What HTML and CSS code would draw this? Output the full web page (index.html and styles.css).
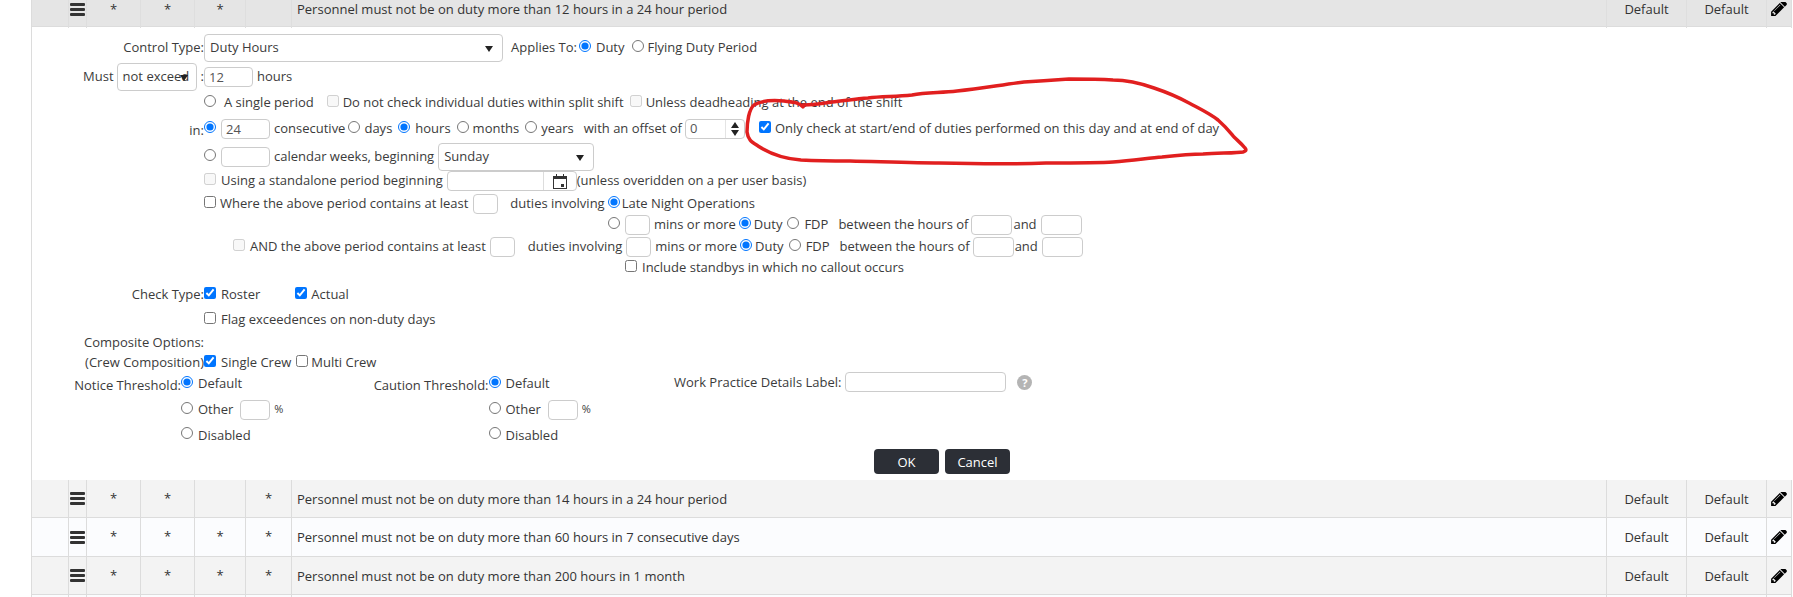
FILE: index.html
```html
<!DOCTYPE html>
<html>
<head>
    <meta charset="utf-8">
    <title>Work Practice Rules</title>
    <link rel="stylesheet" href="styles.css">
</head>
<body>
<div class="page">
    <!-- open rule -->
    <div class="rule rule-open">
        <div class="cell"></div>
        <div class="cell"><svg class="bars" viewBox="0 0 15 13"><rect width="15" height="3" rx="1"/><rect y="5" width="15" height="3" rx="1"/><rect y="10" width="15" height="3" rx="1"/></svg></div>
        <div class="cell star">*</div>
        <div class="cell star">*</div>
        <div class="cell star">*</div>
        <div class="cell"></div>
        <div class="cell name">Personnel must not be on duty more than 12 hours in a 24 hour period</div>
        <div class="cell">Default</div>
        <div class="cell">Default</div>
        <div class="cell"><svg class="pencil" viewBox="0 128 1515 1344"><path d="M363 1344l91-91-235-235-91 91v107h128v128h107zm523-928q0-22-22-22-10 0-17 7l-542 542q-7 7-7 17 0 22 22 22 10 0 17-7l542-542q7-7 7-17zm-54-192l416 416-832 832h-416v-416zm683 96q0 53-37 90l-166 166-416-416 166-165q36-38 90-38 53 0 91 38l235 234q37 39 37 91z"/></svg></div>
    </div>

    <div class="form">
        <div class="row h29">
            <div class="lbl">Control Type:</div>
            <div class="select w299">Duty Hours</div>
            <span class="ml8">Applies To:</span>
            <input class="ml2" type="radio" name="applies" checked>
            <span class="ml4">Duty</span>
            <input class="ml7" type="radio" name="applies">
            <span class="ml3">Flying Duty Period</span>
        </div>
        <div class="row h29">
            <div class="lbl lbl-sel">
                <span>Must</span>
                <div class="select w80 ml3 tight">not exceed</div>
                <span class="ml4">:</span>
            </div>
            <input class="text w49 ml0" type="text" value="12">
            <span class="ml4">hours</span>
        </div>
        <div class="row h24">
            <div class="lbl"></div>
            <input type="radio" name="period">
            <span class="ml7">A single period</span>
            <input class="ml13" type="checkbox" disabled>
            <span class="ml3">Do not check individual duties within split shift</span>
            <input class="ml6" type="checkbox" disabled>
            <span class="ml3">Unless deadheading at the end of the shift</span>
        </div>
        <div class="row h27">
            <div class="lbl"><span class="low">in:</span></div>
            <input type="radio" name="period" checked>
            <input class="text w49 ml4" type="text" value="24">
            <span class="ml4">consecutive</span>
            <input class="ml3" type="radio" name="unit">
            <span class="ml3">days</span>
            <input class="ml6" type="radio" name="unit" checked>
            <span class="ml4">hours</span>
            <input class="ml6" type="radio" name="unit">
            <span class="ml3">months</span>
            <input class="ml6" type="radio" name="unit">
            <span class="ml3">years</span>
            <span class="ml10">with an offset of</span>
            <div class="spin ml3">
                <span>0</span>
                <div class="arrows"><i class="up"></i><i class="down"></i></div>
            </div>
            <input class="ml14" type="checkbox" checked>
            <span class="ml3">Only check at start/end of duties performed on this day and at end of day</span>
        </div>
        <div class="row h29">
            <div class="lbl"></div>
            <input type="radio" name="period">
            <input class="text w49 ml4" type="text">
            <span class="ml4">calendar weeks, beginning</span>
            <div class="select w156 ml4">Sunday</div>
        </div>
        <div class="row h20">
            <div class="lbl"></div>
            <input type="checkbox" disabled>
            <span class="ml4">Using a standalone period beginning</span>
            <div class="date ml4">
                <div class="addon">
                    <svg class="cal" viewBox="0 0 14 15"><path d="M3 0h1v2h6V0h1v2h3v13H0V2h3zM1 5v9h12V5z"/><rect x="8" y="10" width="3" height="3"/></svg>
                </div>
            </div>
            <span class="ml0">(unless overidden on a per user basis)</span>
        </div>
        <div class="row h23 mt1">
            <div class="lbl"></div>
            <input type="checkbox">
            <span class="ml3">Where the above period contains at least</span>
            <input class="text w25 ml5" type="text">
            <span class="ml12">duties involving</span>
            <input class="ml3" type="radio" name="involve" checked>
            <span class="ml1">Late Night Operations</span>
        </div>
        <div class="row h20">
            <div class="lbl"></div>
            <input class="push-mins" type="radio" name="involve">
            <input class="text w25 ml4" type="text">
            <span class="ml4">mins or more</span>
            <input class="ml3" type="radio" name="basis1" checked>
            <span class="ml2">Duty</span>
            <input class="ml5" type="radio" name="basis1">
            <span class="ml4">FDP</span>
            <span class="ml10">between the hours of</span>
            <input class="text w41 ml3" type="text">
            <span class="ml1">and</span>
            <input class="text w41 ml4" type="text">
        </div>
        <div class="row h20 mt2">
            <div class="lbl"></div>
            <input class="push-and" type="checkbox" disabled>
            <span class="ml4">AND the above period contains at least</span>
            <input class="text w25 ml4" type="text">
            <span class="ml13">duties involving</span>
            <input class="text w25 ml4" type="text">
            <span class="ml4">mins or more</span>
            <input class="ml3" type="radio" name="basis2" checked>
            <span class="ml2">Duty</span>
            <input class="ml5" type="radio" name="basis2">
            <span class="ml4">FDP</span>
            <span class="ml10">between the hours of</span>
            <input class="text w41 ml3" type="text">
            <span class="ml1">and</span>
            <input class="text w41 ml4" type="text">
        </div>
        <div class="row h22">
            <div class="lbl"></div>
            <input class="push-incl" type="checkbox">
            <span class="ml4">Include standbys in which no callout occurs</span>
        </div>
        <div class="row h21 mt5">
            <div class="lbl"><span class="low1">Check Type:</span></div>
            <input type="checkbox" checked>
            <span class="ml4">Roster</span>
            <input class="ml35" type="checkbox" checked>
            <span class="ml3">Actual</span>
        </div>
        <div class="row h20 mt5">
            <div class="lbl"></div>
            <input type="checkbox">
            <span class="ml4">Flag exceedences on non-duty days</span>
        </div>
        <div class="row h20 mt3">
            <div class="lbl">Composite Options:</div>
        </div>
        <div class="row h18 crew">
            <div class="lbl">(Crew Composition)</div>
            <input type="checkbox" checked>
            <span class="ml4">Single Crew</span>
            <input class="ml5" type="checkbox">
            <span class="ml2">Multi Crew</span>
        </div>

        <div class="thresholds">
            <div class="th-label"><span>Notice Threshold:</span></div>
            <div class="opt"><input type="radio" name="notice" checked><span class="ml4 up">Default</span></div>
            <div class="th-label"><span>Caution Threshold:</span></div>
            <div class="opt"><input type="radio" name="caution" checked><span class="ml4 up">Default</span></div>
            <div class="work">
                <span>Work Practice Details Label:</span>
                <input class="text w161 ml4" type="text">
                <span class="help ml11">?</span>
            </div>

            <div></div>
            <div class="opt"><input type="radio" name="notice"><span class="ml4">Other</span><input class="text w29 ml7" type="text"><span class="ml4 small">%</span></div>
            <div></div>
            <div class="opt"><input type="radio" name="caution"><span class="ml4">Other</span><input class="text w29 ml7" type="text"><span class="ml4 small">%</span></div>
            <div></div>

            <div></div>
            <div class="opt"><input type="radio" name="notice"><span class="ml4">Disabled</span></div>
            <div></div>
            <div class="opt"><input type="radio" name="caution"><span class="ml4">Disabled</span></div>
            <div></div>
        </div>

        <div class="buttons">
            <button class="btn">OK</button>
            <button class="btn">Cancel</button>
        </div>
    </div>

    <div class="rule rule-odd">
        <div class="cell"></div>
        <div class="cell"><svg class="bars" viewBox="0 0 15 13"><rect width="15" height="3" rx="1"/><rect y="5" width="15" height="3" rx="1"/><rect y="10" width="15" height="3" rx="1"/></svg></div>
        <div class="cell star">*</div>
        <div class="cell star">*</div>
        <div class="cell star"></div>
        <div class="cell star">*</div>
        <div class="cell name">Personnel must not be on duty more than 14 hours in a 24 hour period</div>
        <div class="cell">Default</div>
        <div class="cell">Default</div>
        <div class="cell"><svg class="pencil" viewBox="0 128 1515 1344"><path d="M363 1344l91-91-235-235-91 91v107h128v128h107zm523-928q0-22-22-22-10 0-17 7l-542 542q-7 7-7 17 0 22 22 22 10 0 17-7l542-542q7-7 7-17zm-54-192l416 416-832 832h-416v-416zm683 96q0 53-37 90l-166 166-416-416 166-165q36-38 90-38 53 0 91 38l235 234q37 39 37 91z"/></svg></div>
    </div>
    <div class="rule rule-even rule-tall">
        <div class="cell"></div>
        <div class="cell"><svg class="bars" viewBox="0 0 15 13"><rect width="15" height="3" rx="1"/><rect y="5" width="15" height="3" rx="1"/><rect y="10" width="15" height="3" rx="1"/></svg></div>
        <div class="cell star">*</div>
        <div class="cell star">*</div>
        <div class="cell star">*</div>
        <div class="cell star">*</div>
        <div class="cell name">Personnel must not be on duty more than 60 hours in 7 consecutive days</div>
        <div class="cell">Default</div>
        <div class="cell">Default</div>
        <div class="cell"><svg class="pencil" viewBox="0 128 1515 1344"><path d="M363 1344l91-91-235-235-91 91v107h128v128h107zm523-928q0-22-22-22-10 0-17 7l-542 542q-7 7-7 17 0 22 22 22 10 0 17-7l542-542q7-7 7-17zm-54-192l416 416-832 832h-416v-416zm683 96q0 53-37 90l-166 166-416-416 166-165q36-38 90-38 53 0 91 38l235 234q37 39 37 91z"/></svg></div>
    </div>
    <div class="rule rule-odd">
        <div class="cell"></div>
        <div class="cell"><svg class="bars" viewBox="0 0 15 13"><rect width="15" height="3" rx="1"/><rect y="5" width="15" height="3" rx="1"/><rect y="10" width="15" height="3" rx="1"/></svg></div>
        <div class="cell star">*</div>
        <div class="cell star">*</div>
        <div class="cell star">*</div>
        <div class="cell star">*</div>
        <div class="cell name">Personnel must not be on duty more than 200 hours in 1 month</div>
        <div class="cell">Default</div>
        <div class="cell">Default</div>
        <div class="cell"><svg class="pencil" viewBox="0 128 1515 1344"><path d="M363 1344l91-91-235-235-91 91v107h128v128h107zm523-928q0-22-22-22-10 0-17 7l-542 542q-7 7-7 17 0 22 22 22 10 0 17-7l542-542q7-7 7-17zm-54-192l416 416-832 832h-416v-416zm683 96q0 53-37 90l-166 166-416-416 166-165q36-38 90-38 53 0 91 38l235 234q37 39 37 91z"/></svg></div>
    </div>
    <div class="rule rule-even rule-last">
        <div class="cell"></div><div class="cell"></div><div class="cell"></div><div class="cell"></div>
        <div class="cell"></div><div class="cell"></div><div class="cell"></div><div class="cell"></div>
        <div class="cell"></div><div class="cell"></div>
    </div>
</div>

<!-- red pen mark drawn over the screenshot -->
<svg class="scribble" viewBox="0 0 1793 597">
    <path d="M803 107C799 102 792 102 784 101C772 100 760 101 754 105C749 109 747 122 747 132C748 140 752 142 758 146C772 155 788 159 801 160C820 161 840 161 850 161C890 162 920 163 939 163C980 164 1020 164 1046 163C1080 163 1100 163 1113 162C1135 160 1150 158 1162 157C1180 155 1195 154 1203 154C1220 153 1238 153 1243 152C1247 151 1246 149 1245 148C1241 143 1238 141 1234 137C1229 131 1226 127 1218 120C1209 113 1200 109 1189 103C1178 97 1166 92 1154 88C1140 83 1128 80 1113 80C1098 79 1085 79 1069 79C1052 80 1040 81 1024 82C1000 85 980 89 957 91C940 93 926 92 912 95C895 97 882 96 868 98C855 99 843 101 832 102C820 104 812 105 803 105"/>
</svg>
</body>
</html>
```

FILE: styles.css
```css
html, body {
    margin: 0;
    height: 597px;
    overflow: hidden;
    background: #fff;
}
body {
    position: relative;
    font-family: "Open Sans", "Liberation Sans", sans-serif;
    font-size: 13px;
    line-height: 18px;
    color: #3b3b3b;
}
.page {
    margin-left: 31px;
    margin-right: 1px;
    border-left: 1px solid #dcdcdc;
}

/* rule rows */
.rule {
    display: grid;
    grid-template-columns: 37px 18px 54px 54px 51px 46px 1fr 80px 80px 25px;
    height: 38px;
    border-bottom: 1px solid #dcdcdc;
    box-sizing: border-box;
}
.rule-tall { height: 39px; }
.rule-last {
    height: 2px;
    border-bottom: none;
}
.rule-open {
    height: 27px;
    background: #e5e5e5;
}
.rule-open .cell {
    padding-bottom: 10px;
    border-right-color: #dedede;
}
.rule-odd { background: #f3f3f3; }
.rule-even { background: #fbfcfe; }
.cell {
    display: flex;
    align-items: center;
    justify-content: center;
    border-right: 1px solid #dcdcdc;
    box-sizing: border-box;
    color: #333;
}
.name {
    justify-content: flex-start;
    padding-left: 5px;
}
.star { padding-bottom: 2px; }
.bars {
    width: 15px;
    height: 13px;
    fill: #333;
}
.pencil {
    width: 16px;
    height: 14px;
    fill: #000;
}

/* edit form */
.form {
    padding: 6px 0 6px;
    background: #fff;
}
.row {
    display: flex;
    align-items: center;
    box-sizing: border-box;
    white-space: nowrap;
}
.row span {
    flex: none;
    margin-bottom: 2px;
}
.lbl {
    display: flex;
    justify-content: flex-end;
    align-items: center;
    flex: none;
    width: 172px;
    margin-bottom: 2px;
}
.lbl-sel { margin-bottom: 0; }
.low { padding-top: 6px; }
.low1 { padding-top: 3px; }
.crew { padding-top: 2px; }
.h18 { height: 18px; }
.h20 { height: 20px; }
.h21 { height: 21px; }
.h22 { height: 22px; }
.h23 { height: 23px; }
.h24 { height: 24px; }
.h27 { height: 27px; }
.h29 { height: 29px; }
.mt1 { margin-top: 1px; }
.mt2 { margin-top: 2px; }
.mt3 { margin-top: 3px; }
.mt5 { margin-top: 5px; }

input[type=radio], input[type=checkbox] {
    flex: none;
    width: 12px;
    height: 12px;
    margin: 0 1px 4px 0;
}
input.ml2 { margin-left: 2px; }
input.ml3 { margin-left: 3px; }
input.ml4 { margin-left: 4px; }
input.ml5 { margin-left: 5px; }
input.ml6 { margin-left: 6px; }
input.ml7 { margin-left: 7px; }
input.ml13 { margin-left: 13px; }
input.ml14 { margin-left: 14px; }
input.ml35 { margin-left: 35px; }
input.push-mins { margin-left: 404px; }
input.push-and { margin-left: 29px; }
input.push-incl { margin-left: 421px; }

.row span.ml0 { margin-left: 0; }
.ml0 { margin-left: 0; }
.ml1 { margin-left: 1px; }
.ml2 { margin-left: 2px; }
.ml3 { margin-left: 3px; }
.ml4 { margin-left: 4px; }
.ml5 { margin-left: 5px; }
.ml6 { margin-left: 6px; }
.ml7 { margin-left: 7px; }
.ml8 { margin-left: 8px; }
.ml10 { margin-left: 10px; }
.ml11 { margin-left: 11px; }
.ml12 { margin-left: 12px; }
.ml13 { margin-left: 13px; }
.ml14 { margin-left: 14px; }

.text {
    flex: none;
    height: 20px;
    padding: 0 4px;
    box-sizing: border-box;
    border: 1px solid #ccc;
    border-radius: 4px;
    background: #fff;
    font: 13px "Open Sans", "Liberation Sans", sans-serif;
    color: #555;
}
.w25 { width: 25px; }
.w29 { width: 30px; }
.w41 { width: 41px; }
.w49 { width: 49px; }
.w161 { width: 161px; }

.select {
    position: relative;
    flex: none;
    height: 28px;
    padding-left: 5px;
    box-sizing: border-box;
    border: 1px solid #ccc;
    border-radius: 4px;
    background: #fff;
    line-height: 25px;
    text-align: left;
}
.select::after {
    content: "";
    position: absolute;
    top: 11px;
    right: 9px;
    border-left: 4px solid transparent;
    border-right: 4px solid transparent;
    border-top: 6px solid #222;
}
.tight::after { right: 8px; }
.w299 { width: 299px; }
.w80 { width: 80px; }
.w156 { width: 156px; }

.spin {
    display: flex;
    flex: none;
    align-items: center;
    justify-content: space-between;
    width: 60px;
    height: 20px;
    padding-left: 4px;
    box-sizing: border-box;
    border: 1px solid #ccc;
    border-radius: 4px;
    color: #555;
}
.arrows {
    display: flex;
    flex-direction: column;
    align-items: center;
    justify-content: center;
    width: 18px;
    height: 100%;
    border-left: 1px solid #e4e4e4;
}
.arrows i {
    display: block;
    border-left: 4px solid transparent;
    border-right: 4px solid transparent;
}
.arrows .up {
    margin-bottom: 2px;
    border-bottom: 6px solid #222;
}
.arrows .down { border-top: 6px solid #222; }

.date {
    display: flex;
    flex: none;
    justify-content: flex-end;
    width: 130px;
    height: 20px;
    box-sizing: border-box;
    border: 1px solid #ccc;
    border-radius: 4px;
}
.addon {
    display: flex;
    align-items: center;
    justify-content: center;
    width: 32px;
    border-left: 1px solid #ddd;
}
.cal {
    width: 14px;
    height: 15px;
    fill: #333;
}

.thresholds {
    display: grid;
    grid-template-columns: 149px 193px 114.500px 185.500px auto;
    grid-template-rows: 26px 25px 26px;
    white-space: nowrap;
}
.th-label {
    display: flex;
    align-items: center;
    justify-content: flex-end;
}
.th-label span { padding-top: 2px; }
.opt {
    display: flex;
    align-items: center;
}
.opt span { margin-bottom: 1px; }
.opt span.up { margin-bottom: 3px; }
.small { font-size: 11px; }
.work {
    display: flex;
    align-items: center;
    margin-bottom: 4px;
}
.help {
    display: inline-block;
    width: 15px;
    height: 15px;
    border-radius: 50%;
    background: #b4b4b4;
    color: #fff;
    font-size: 11px;
    font-weight: 700;
    line-height: 15px;
    text-align: center;
}

.buttons {
    display: flex;
    justify-content: flex-start;
    gap: 6px;
    margin-top: 1px;
    padding-left: 842px;
}
.btn {
    width: 65px;
    height: 25px;
    padding: 0;
    border: none;
    border-radius: 4px;
    background: #2c2f36;
    color: #fff;
    font: 13px "Open Sans", "Liberation Sans", sans-serif;
}

.scribble {
    position: absolute;
    top: 0;
    left: 0;
    width: 1793px;
    height: 597px;
    pointer-events: none;
}
.scribble path {
    fill: none;
    stroke: #e11f1f;
    stroke-width: 3.500px;
    stroke-linecap: round;
    stroke-linejoin: round;
}
```
